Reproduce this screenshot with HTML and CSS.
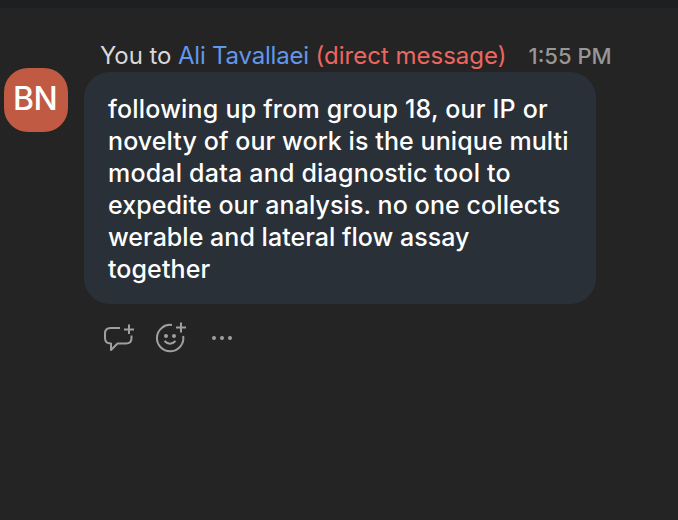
FILE: index.html
```html
<!DOCTYPE html>
<html lang="en">
<head>
<meta charset="utf-8">
<title>Chat</title>
<link rel="stylesheet" href="styles.css">
</head>
<body>
<div class="topbar"></div>
<main class="message">
  <div class="avatar">BN</div>
  <div class="content">
    <header class="meta">
      <span class="route">You to <span class="name">Ali Tavallaei</span> <span class="direct">(direct message)</span></span>
      <time class="time">1:55 PM</time>
    </header>
    <p class="bubble"><span class="loose">following up from group 18, our IP or</span><br>novelty of our work is the unique multi<br><span class="loose">modal data and diagnostic tool to</span><br>expedite our analysis. no one collects<br><span class="tight">werable and lateral flow assay</span><br>together</p>
    <div class="actions">
      <svg class="icon" width="32" height="32" viewBox="0 0 32 32"><path d="M18 7H8.500Q3 7 3 12.500V17Q3 22.500 9 22.500V29L15.500 22.500H24Q29.500 22.500 29.500 17V14.500M27 3.500V13M22 8.500H32"/></svg>
      <svg class="icon" width="32" height="32" viewBox="0 0 32 32"><path d="M18 4A13.200 13.200 0 1 0 29.200 15M27 1.500V11.500M22 6.500H32M10.500 20Q16 25.500 21.500 20"/><g class="dots"><circle cx="12" cy="15" r="2"/><circle cx="20" cy="15" r="2"/></g></svg>
      <svg class="icon" width="32" height="32" viewBox="0 0 32 32"><g class="dots"><circle cx="8" cy="17" r="2"/><circle cx="16" cy="17" r="2"/><circle cx="24" cy="17" r="2"/></g></svg>
    </div>
  </div>
</main>
</body>
</html>
```
FILE: styles.css
```css
* { box-sizing: border-box; }
body {
  margin: 0;
  min-height: 520px;
  background: #242424;
  font-family: Inter, "Liberation Sans", sans-serif;
}
.topbar { height: 8px; background: #1e1f21; }
.message { display: flex; gap: 16px; padding: 32px 0 0 4px; }
.avatar {
  width: 64px;
  height: 64px;
  margin-top: 28px;
  padding-right: 2px;
  border-radius: 24px;
  background: #c05a42;
  color: #fff;
  font-size: 32px;
  font-weight: 500;
  line-height: 62px;
  text-align: center;
  letter-spacing: -0.5px;
}
.content { width: 560px; }
.meta {
  display: flex;
  gap: 22px;
  height: 32px;
  padding-left: 16px;
  line-height: 32px;
  white-space: nowrap;
  color: #d8d8d8;
}
.route { font-size: 24px; letter-spacing: -0.09px; }
.name { color: #6297ee; letter-spacing: -0.2px; }
.direct { color: #ed665f; letter-spacing: 0; }
.time { font-size: 22px; font-weight: 500; color: #979797; }
.bubble {
  width: 512px;
  height: 232px;
  margin: 0;
  padding: 21px 24px;
  border-radius: 26px;
  background: #2a3038;
  color: #fff;
  font-size: 25px;
  font-weight: 500;
  line-height: 32px;
  letter-spacing: 0.09px;
  white-space: nowrap;
}
.loose { letter-spacing: 0.2px; }
.tight { letter-spacing: 0.03px; }
.actions { display: flex; gap: 20px; padding: 17px 0 0 18px; }
.icon {
  fill: none;
  stroke: #a0a0a0;
  stroke-width: 2;
  stroke-linejoin: round;
}
.dots { fill: #a0a0a0; stroke: none; }
```
